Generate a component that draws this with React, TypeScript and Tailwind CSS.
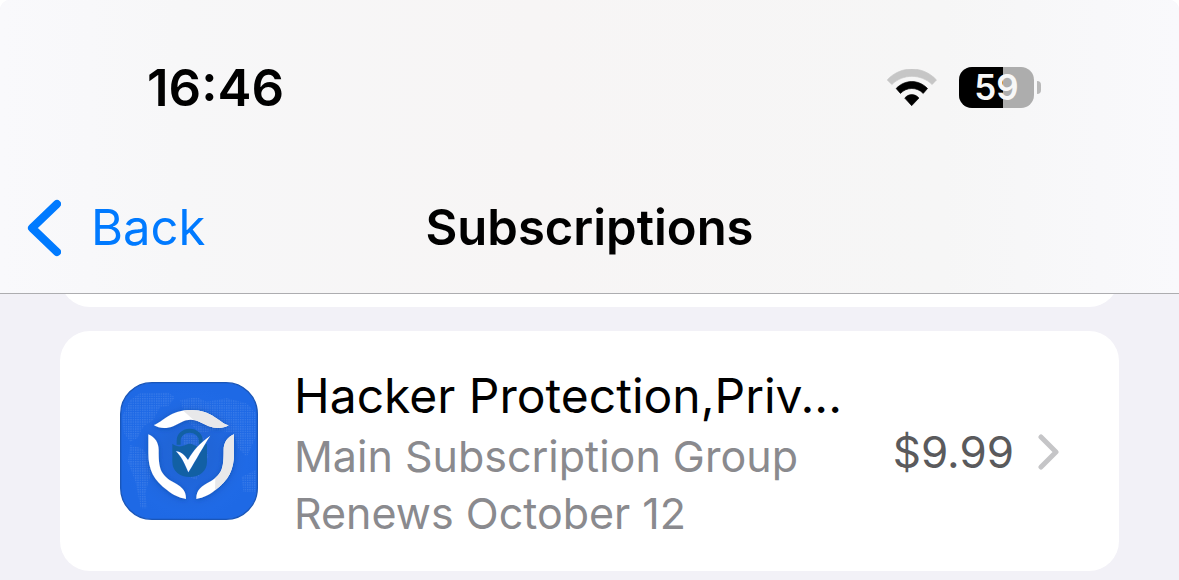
import React from "react";

interface Subscription {
  name: string;
  group: string;
  renewal: string;
  price: string;
}

const subscriptions: Subscription[] = [
  {
    name: "Hacker Protection,Priv...",
    group: "Main Subscription Group",
    renewal: "Renews October 12",
    price: "$9.99",
  },
];

const WifiIcon: React.FC = () => (
  <svg viewBox="50 56 150 112" className="h-[37px] w-[50px]" aria-hidden="true">
    <path
      d="M50 89C91 45 158 45 199 89L186 103C151 70 98 70 64 103Z"
      fill="#c6c6c6"
      stroke="#c6c6c6"
      strokeWidth="2"
      strokeLinejoin="round"
    />
    <path
      d="M77 115C104 87 145 87 172 115L159 130C140 110 109 110 90 130Z"
      stroke="#000"
      strokeWidth="2"
      strokeLinejoin="round"
    />
    <path
      d="M103 144C115 130 134 130 146 144L124 167Z"
      stroke="#000"
      strokeWidth="2"
      strokeLinejoin="round"
    />
  </svg>
);

const Battery: React.FC<{ level: number }> = ({ level }) => (
  <div className="flex items-center gap-[3px]">
    <div className="relative flex h-[41px] w-[75px] items-center justify-center overflow-hidden rounded-[13px] bg-[#adadad]">
      <div
        className="absolute inset-y-0 left-0 bg-black"
        style={{ width: `${level}%` }}
      />
      <span className="relative text-[35px] leading-[41px] font-semibold text-[#f7f7f7]">
        {level}
      </span>
    </div>
    <div className="h-[13px] w-1 rounded-r-full bg-[#b9b9b9]" />
  </div>
);

const AppIcon: React.FC = () => (
  <svg
    viewBox="60 36 414 414"
    className="size-[138px] shrink-0"
    role="img"
    aria-label="Hacker Protection"
  >
    <defs>
      <pattern id="dots" width="7" height="7" patternUnits="userSpaceOnUse">
        <rect width="4" height="4" fill="#fff" />
      </pattern>
      <radialGradient id="glow" cx="50%" cy="52%" r="50%">
        <stop offset="0" stopColor="#2468d6" />
        <stop offset="0.35" stopColor="#2065d8" />
        <stop offset="0.85" stopColor="#1f6ae6" />
        <stop offset="1" stopColor="#1e69e5" />
      </radialGradient>
      <filter id="shadow" x="-20%" y="-20%" width="140%" height="140%">
        <feDropShadow dx="0" dy="2" stdDeviation="8" floodColor="#0c3c90" floodOpacity="0.55" />
      </filter>
    </defs>
    <rect x="62" y="38" width="410" height="410" rx="94" fill="url(#glow)" stroke="#1a56b8" strokeWidth="4" />
    {/* dotted world map */}
    <g fill="url(#dots)" opacity="0.12">
      <path d="M66 140L90 90L120 70H160L205 68L225 82L205 108L180 112L160 150L130 170L112 205L90 215L72 190Z" />
      <path d="M90 225L125 235L155 270L150 320L136 370L142 415H122L108 340L84 275Z" />
      <path d="M240 90L290 82L320 95L380 85L440 100L468 130V200L440 260L415 235L400 190L350 180L300 190L260 150Z" />
      <path d="M245 190L310 200L325 260L290 330L265 320Z" />
      <path d="M425 320L468 300V365H430Z" />
    </g>
    <g filter="url(#shadow)">
      <path
        d="M161 165C190 157 208 120 272 120C338 120 355 158 386 166C368 176 346 176 325 168C308 160 291 149 272 149C252 149 238 160 221 168C199 177 178 176 161 165Z"
        fill="#fff"
      />
      <path
        d="M145 193C166 202 176 219 176 240C176 291 179 311 215 334C242 348 259 360 258 387C235 383 220 375 202 361C161 330 145 300 145 250Z"
        fill="#fff"
      />
      <path
        d="M402 193C381 202 371 219 371 240C371 291 368 311 332 334C305 348 288 360 289 387C312 383 327 375 345 361C386 330 402 300 402 250Z"
        fill="#fff"
      />
    </g>
    <path
      d="M250 122C258 121 264 120 272 120C338 120 355 158 386 166C368 176 346 176 325 168C308 160 295 151 280 149Z"
      fill="#e8e8ea"
    />
    <path
      d="M402 193C381 202 371 219 371 240C371 288 369 306 346 324L345 361C386 330 402 300 402 250Z"
      fill="#e8e8ea"
    />
    {/* padlock with check mark */}
    <path d="M236 224V212A33 30 0 0 1 302 212V224" fill="none" stroke="#1260a4" strokeWidth="12" />
    <path
      d="M217 221C230 231 243 231 254 226C265 220 273 219 281 225C293 231 307 229 321 221V275C321 304 298 321 269 321C240 321 217 304 217 275Z"
      fill="#1260a4"
    />
    <path
      d="M228 244C242 244 254 256 264 270C281 239 300 219 331 197C308 232 290 266 265 307C254 280 244 260 228 244Z"
      fill="#fff"
      stroke="#2267cf"
      strokeWidth="3"
      paintOrder="stroke"
    />
  </svg>
);

const StatusBar: React.FC = () => (
  <div className="flex h-40 items-center justify-between pt-[15px] pr-[138px] pl-[147px]">
    <time className="text-[51px] leading-[60px] font-semibold">16:46</time>
    <div className="flex items-center gap-[22px]">
      <WifiIcon />
      <Battery level={59} />
    </div>
  </div>
);

const NavBar: React.FC = () => (
  <nav className="grid h-[133px] grid-cols-[1fr_auto_1fr] items-center px-[27px] pt-0.5">
    <button
      type="button"
      className="flex items-center gap-[30px] justify-self-start text-[49px] leading-[60px] text-[#007aff]"
    >
      <svg viewBox="0 0 34 58" className="h-[58px] w-[34px]" fill="none" aria-hidden="true">
        <path
          d="M30 5L5 29L30 53"
          stroke="currentColor"
          strokeWidth="8"
          strokeLinecap="round"
          strokeLinejoin="round"
        />
      </svg>
      Back
    </button>
    <h1 className="text-[49px] leading-[60px] font-semibold">Subscriptions</h1>
  </nav>
);

const SubscriptionRow: React.FC<{ item: Subscription }> = ({ item }) => (
  <a
    href="#subscription"
    className="flex h-60 items-center rounded-[30px] bg-white pr-[59px] pl-[60px]"
  >
    <AppIcon />
    <div className="ml-9 min-w-0 flex-1 pt-1 whitespace-nowrap">
      <h2 className="text-[48px] leading-[64px]">{item.name}</h2>
      <p className="text-[43px] leading-[57px] text-[#8a8a8e]">{item.group}</p>
      <p className="text-[43px] leading-[57px] text-[#8a8a8e]">{item.renewal}</p>
    </div>
    <span className="pt-0.5 text-[44px] leading-[57px] text-[#5a5a5c]">{item.price}</span>
    <svg viewBox="0 0 22 38" className="ml-6 h-[38px] w-[22px]" fill="none" aria-hidden="true">
      <path
        d="M3 5L18 20L3 35"
        stroke="#c5c5c7"
        strokeWidth="5"
        strokeLinecap="round"
        strokeLinejoin="round"
      />
    </svg>
  </a>
);

const App: React.FC = () => {
  return (
    <div className="min-h-screen bg-white font-['Inter',sans-serif] text-black">
      <div className="min-h-screen overflow-hidden rounded-t-[10px] bg-[#f2f1f7]">
        <header className="border-b border-[#adadb0] bg-[linear-gradient(to_right,#f9f9fc,#f7f7f8_15%,#f7f5f5_45%,#f6f6f6_80%,#f9f9fc)]">
          <StatusBar />
          <NavBar />
        </header>
        <main className="px-[60px] pb-2">
          {/* tail of the card scrolled under the header */}
          <div className="mb-6 flex h-[13px] items-end overflow-hidden">
            <div className="h-20 flex-1 shrink-0 rounded-[30px] bg-white" />
          </div>
          {subscriptions.map((item) => (
            <SubscriptionRow key={item.name} item={item} />
          ))}
        </main>
      </div>
    </div>
  );
};

export default App;
